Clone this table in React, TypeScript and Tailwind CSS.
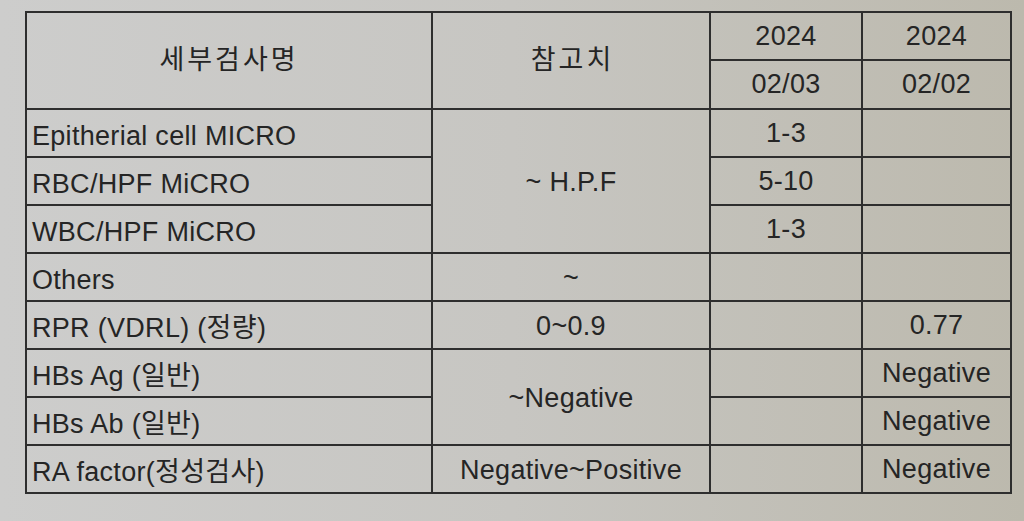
const line = "border-2 border-[#2e2e2e]";

const rows = [
  { name: "Epitherial cell MICRO", ref: "~ H.P.F", refSpan: 3, a: "1-3", b: "" },
  { name: "RBC/HPF MiCRO", a: "5-10", b: "" },
  { name: "WBC/HPF MiCRO", a: "1-3", b: "" },
  { name: "Others", ref: "~", refSpan: 1, a: "", b: "" },
  { name: "RPR (VDRL) (정량)", ref: "0~0.9", refSpan: 1, a: "", b: "0.77" },
  { name: "HBs Ag (일반)", ref: "~Negative", refSpan: 2, a: "", b: "Negative" },
  { name: "HBs Ab (일반)", a: "", b: "Negative" },
  { name: "RA factor(정성검사)", ref: "Negative~Positive", refSpan: 1, a: "", b: "Negative" },
];

const App = () => {
  return (
    <div
      className="w-[1024px] h-[521px] overflow-hidden bg-linear-to-r from-[#cdcdcc] via-[#c7c6c2] to-[#bcb9ad] pt-[11px] pl-[25px] text-[#252525] text-[27px] leading-none tracking-[0.3px]"
      style={{ fontFamily: '"Liberation Sans", "Noto Sans CJK KR", sans-serif' }}
    >
      <table className="table-fixed border-collapse w-[985px]">
        <colgroup>
          <col className="w-[406px]" />
          <col className="w-[278px]" />
          <col className="w-[152px]" />
          <col className="w-[149px]" />
        </colgroup>
        <thead>
          <tr className="h-[48px]">
            <th rowSpan={2} className={`${line} font-normal text-center tracking-[3px]`}>세부검사명</th>
            <th rowSpan={2} className={`${line} font-normal text-center tracking-[3px] pl-[3px]`}>참고치</th>
            <th className={`${line} font-normal text-center`}>2024</th>
            <th className={`${line} font-normal text-center`}>2024</th>
          </tr>
          <tr className="h-[49px]">
            <th className={`${line} font-normal text-center`}>02/03</th>
            <th className={`${line} font-normal text-center`}>02/02</th>
          </tr>
        </thead>
        <tbody>
          {rows.map((r) => (
            <tr key={r.name} className="h-[48px]">
              <td className={`${line} pl-[5px] pt-[6px] whitespace-nowrap`}>{r.name}</td>
              {r.ref !== undefined && (
                <td rowSpan={r.refSpan} className={`${line} text-center pt-[2px]`}>
                  {r.ref}
                </td>
              )}
              <td className={`${line} text-center pt-[1px]`}>{r.a}</td>
              <td className={`${line} text-center pt-[1px]`}>{r.b}</td>
            </tr>
          ))}
        </tbody>
      </table>
    </div>
  );
};

export default App;
